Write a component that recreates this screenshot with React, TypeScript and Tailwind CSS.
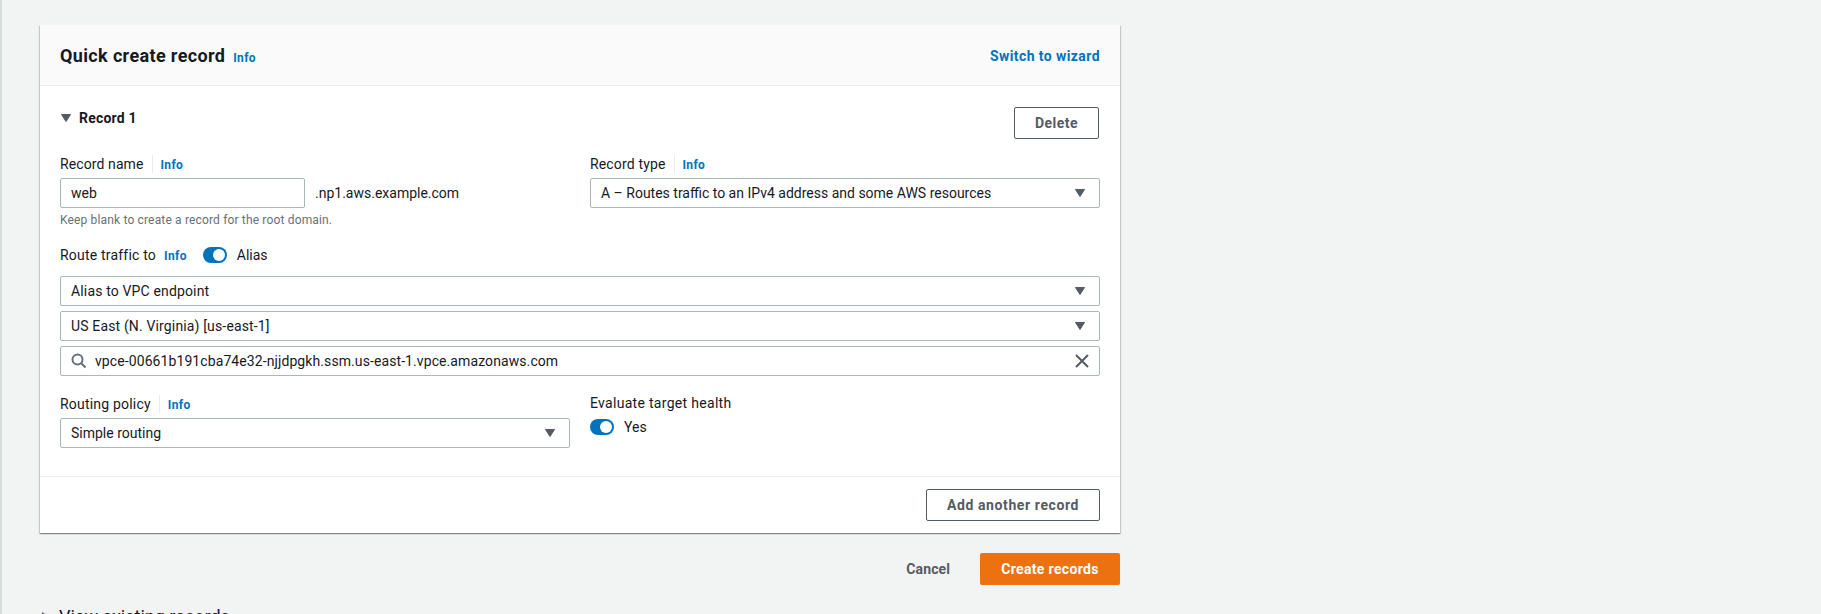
const font = { fontFamily: 'Roboto, sans-serif' };

function Info({ bar = true }: { bar?: boolean }) {
  return (
    <span className="flex items-center">
      {bar && <span className="mx-2 h-[18px] w-px bg-[#e9ebed]" />}
      <span className="pt-px text-[12px] font-bold leading-[16px] tracking-[0.35px] text-[#0073bb]">Info</span>
    </span>
  );
}

function Caret() {
  return (
    <svg width="12" height="10" viewBox="0 0 12 10" className="shrink-0">
      <path d="M1.5 1.5h9L6 8.5z" fill="#545b64" stroke="#545b64" strokeLinejoin="round" />
    </svg>
  );
}

function Select({ text, className = "" }: { text: string; className?: string }) {
  return (
    <div className={"flex h-[30px] items-center justify-between rounded-[2px] border border-[#aab7b8] bg-white pl-[10px] pr-[13px] " + className}>
      <span className="text-[14px] leading-[20px] text-[#16191f]">{text}</span>
      <Caret />
    </div>
  );
}

function Toggle() {
  return (
    <span className="flex h-4 w-6 items-center justify-end rounded-full bg-[#0073bb] pr-[2px]">
      <span className="h-3 w-3 rounded-full bg-white" />
    </span>
  );
}

export default function App() {
  return (
    <div style={font} className="h-[614px] w-[1821px] overflow-hidden border-l-2 border-[#d5dbdb] bg-[#f2f3f3] pl-[38px] pt-[25px] text-[#16191f]">
      <div className="flex w-[1080px] flex-col bg-white shadow-[0_1px_1px_0_rgba(0,28,36,0.3),1px_1px_1px_0_rgba(0,28,36,0.15),-1px_1px_1px_0_rgba(0,28,36,0.15)]">
        <div className="flex h-[61px] items-center justify-between border-b border-[#eaeded] bg-[#fafafa] pl-[20px] pr-[20px] pt-px">
          <div className="flex items-center">
            <span className="text-[18px] font-bold leading-[22px] tracking-[0.36px]">Quick create record</span>
            <span className="ml-2 pt-[3px]"><Info bar={false} /></span>
          </div>
          <span className="text-[14px] font-bold leading-[20px] tracking-[0.42px] text-[#0073bb]">Switch to wizard</span>
        </div>

        <div className="px-[20px] pt-[21px]">
          <div className="flex items-start justify-between">
            <div className="flex items-center gap-[7px] pt-[1px]">
              <Caret />
              <span className="text-[14px] font-bold leading-[20px] tracking-[0.2px]">Record 1</span>
            </div>
            <button className="mr-px h-[32px] w-[85px] rounded-[2px] border border-[#545b64] bg-white text-[14px] font-bold tracking-[0.5px] text-[#545b64]">Delete</button>
          </div>

          <div className="mt-[14px] grid grid-cols-[510px_510px] gap-x-[20px]">
            <div>
              <div className="flex h-[20px] items-center pt-[2px] text-[14px] tracking-[0.1px]">Record name<Info /></div>
              <div className="mt-[5px] flex items-center">
                <div className="flex h-[30px] w-[245px] items-center rounded-[2px] border border-[#aab7b8] pl-[10px] text-[14px]">web</div>
                <span className="ml-[10px] text-[14px]">.np1.aws.example.com</span>
              </div>
              <div className="mt-[4px] text-[12px] leading-[16px] tracking-[0.16px] text-[#687078]">Keep blank to create a record for the root domain.</div>
            </div>
            <div>
              <div className="flex h-[20px] items-center pt-[2px] text-[14px] tracking-[0.15px]">Record type<Info /></div>
              <Select className="mt-[5px]" text="A – Routes traffic to an IPv4 address and some AWS resources" />
            </div>
          </div>

          <div className="mt-[17px] flex h-[20px] items-center text-[14px]">
            <span className="tracking-[0.2px]">Route traffic to</span>
            <span className="ml-2"><Info bar={false} /></span>
            <span className="ml-[16px]"><Toggle /></span>
            <span className="ml-[10px]">Alias</span>
          </div>

          <div className="mt-[11px] flex flex-col gap-[5px] tracking-[0.15px]">
            <Select text="Alias to VPC endpoint" />
            <Select text="US East (N. Virginia) [us-east-1]" />
            <div className="flex h-[30px] items-center justify-between rounded-[2px] border border-[#aab7b8] pl-[10px] pr-[9px]">
              <div className="flex items-center gap-[8px]">
                <svg width="16" height="16" viewBox="0 0 16 16" fill="none" stroke="#687078" strokeWidth="2">
                  <circle cx="6.5" cy="6.5" r="5" />
                  <path d="M10 10l4.5 4.5" />
                </svg>
                <span className="text-[14px] tracking-[0.09px]">vpce-00661b191cba74e32-njjdpgkh.ssm.us-east-1.vpce.amazonaws.com</span>
              </div>
              <svg width="16" height="16" viewBox="0 0 16 16" fill="none" stroke="#545b64" strokeWidth="2">
                <path d="M2 2l12 12M14 2 2 14" />
              </svg>
            </div>
          </div>

          <div className="mt-[17px] grid grid-cols-[510px_510px] gap-x-[20px]">
            <div>
              <div className="flex h-[20px] items-center pt-[2px] text-[14px] tracking-[0.2px]">Routing policy<Info /></div>
              <Select className="mt-[5px]" text="Simple routing" />
            </div>
            <div>
              <div className="text-[14px] leading-[20px] tracking-[0.3px]">Evaluate target health</div>
              <div className="mt-[6px] flex items-center gap-[10px]">
                <Toggle />
                <span className="text-[14px] leading-[16px]">Yes</span>
              </div>
            </div>
          </div>
        </div>

        <div className="mt-[28px] flex h-[57px] items-center justify-end border-t border-[#eaeded] pr-[20px]">
          <button className="h-[32px] w-[174px] rounded-[2px] border border-[#545b64] bg-white text-[14px] font-bold tracking-[0.6px] text-[#545b64]">Add another record</button>
        </div>
      </div>

      <div className="mt-[20px] flex w-[1080px] items-center justify-end">
        <span className="text-[14px] font-bold tracking-[0.1px] text-[#545b64]">Cancel</span>
        <button className="ml-[30px] h-[32px] w-[140px] rounded-[2px] bg-[#ec7211] text-[14px] font-bold tracking-[0.35px] text-white">Create records</button>
      </div>

      <div className="mt-[21px] flex items-center gap-[10px] pl-[1px]">
        <svg width="8" height="10" viewBox="0 0 8 10"><path d="M1 0v8l6-4z" fill="#545b64" /></svg>
        <span className="text-[18px] leading-[22px]">View existing records</span>
      </div>
    </div>
  );
}
